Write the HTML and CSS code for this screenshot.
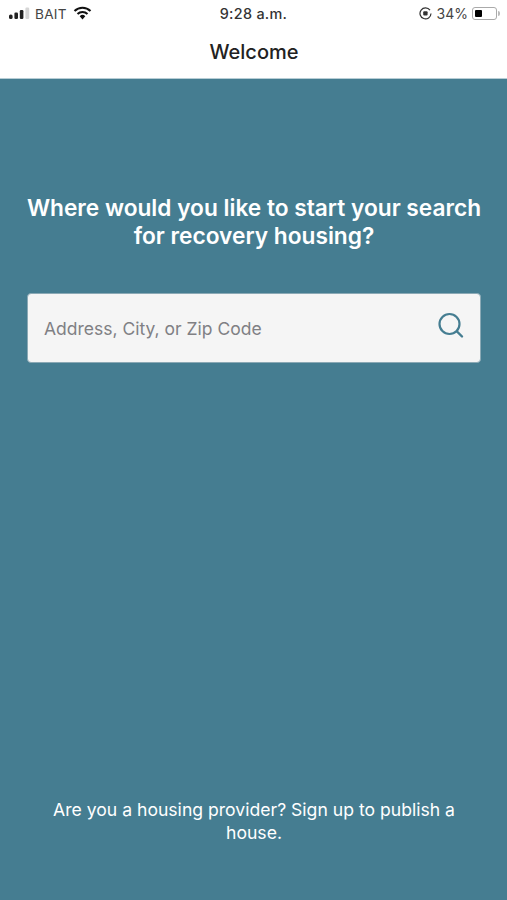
FILE: index.html
```html
<!DOCTYPE html>
<html lang="en">

<head>
    <meta charset="UTF-8">
    <meta name="viewport" content="width=device-width, initial-scale=1.0">
    <title>Welcome</title>
    <link rel="stylesheet" href="styles.css">
</head>

<body>
    <div class="status-bar">
        <div class="status-left">
            <svg class="signal" width="22" height="13" viewBox="0 0 22 13">
                <rect x="0" y="7.5" width="3.6" height="4.5" rx="1.6" fill="#222" />
                <rect x="5.4" y="5.5" width="3.6" height="6.5" rx="1.2" fill="#222" />
                <rect x="10.8" y="3" width="3.6" height="9" rx="1.2" fill="#222" />
                <rect x="16.4" y="0.5" width="3.8" height="11.5" rx="1.2" fill="#d6d6d6" />
            </svg>
            <span class="carrier">BAIT</span>
            <svg class="wifi" width="19" height="14" viewBox="0 0 18 14">
                <path d="M1 5a11.5 11.5 0 0 1 16 0" fill="none" stroke="#111" stroke-width="2.1" />
                <path d="M4 8a7.2 7.2 0 0 1 10 0" fill="none" stroke="#111" stroke-width="2.1" />
                <path d="M6.2 10.2 9 13.4l2.8-3.2a4 4 0 0 0-5.6 0z" fill="#111" />
            </svg>
        </div>
        <div class="status-time">9:28 a.m.</div>
        <div class="status-right">
            <svg width="13" height="13" viewBox="0 0 13 13">
                <path d="M11 3.2A5.5 5.5 0 1 0 12 6.5" fill="none" stroke="#333" stroke-width="1.2" />
                <rect x="4.2" y="4.2" width="4.4" height="4.4" rx="1" fill="#333" />
            </svg>
            <span class="battery-text">34%</span>
            <div class="battery">
                <div class="battery-level"></div>
            </div>
            <div class="battery-tip"></div>
        </div>
    </div>
    <header class="nav-bar">Welcome</header>
    <main class="content">
        <h1 class="headline">Where would you like to start your search for recovery housing?</h1>
        <div class="search-box">
            <span class="search-placeholder">Address, City, or Zip Code</span>
            <svg class="search-icon" width="28" height="28" viewBox="0 0 28 28">
                <circle cx="12.5" cy="12" r="10" fill="none" stroke="#457d91" stroke-width="2.2" />
                <path d="M20 19.5l5 5" fill="none" stroke="#457d91" stroke-width="2.4" stroke-linecap="round" />
            </svg>
        </div>
        <p class="provider-link">Are you a housing provider? Sign up to publish a house.</p>
    </main>
</body>

</html>
```

FILE: styles.css
```css
body {
    font-family: "Inter", "Liberation Sans", sans-serif;
    background-color: #457d91;
    color: #222;
    margin: 0;
    padding: 0;
    height: 900px;
    display: flex;
    flex-direction: column;
    overflow: hidden;
}

.status-bar {
    background: #fff;
    height: 27px;
    display: flex;
    justify-content: space-between;
    align-items: center;
    padding: 0 7px 0 9px;
    position: relative;
    font-size: 14px;
}

.status-left,
.status-right {
    display: flex;
    align-items: center;
}

.signal {
    margin-right: 4px;
}

.carrier {
    color: #444;
    font-size: 13.6px;
    letter-spacing: 0.3px;
    margin-right: 6px;
}

.wifi {
    margin-bottom: 2px;
}

.status-time {
    position: absolute;
    left: 0;
    right: 0;
    text-align: center;
    font-weight: 500;
    font-size: 14.4px;
    color: #333;
    letter-spacing: 0.3px;
}

.battery-text {
    color: #444;
    margin: 0 4px 0 5px;
}

.battery {
    width: 25px;
    height: 13px;
    border: 1px solid #aaa;
    border-radius: 3px;
    padding: 2px;
    box-sizing: border-box;
    display: flex;
}

.battery-level {
    width: 7px;
    background: #000;
    border-radius: 1px;
}

.battery-tip {
    width: 2px;
    height: 5px;
    background: #bbb;
    margin-left: 1px;
    border-radius: 0 2px 2px 0;
}

.nav-bar {
    background: #fff;
    height: 52px;
    box-sizing: border-box;
    padding-bottom: 1px;
    padding-left: 1px;
    display: flex;
    justify-content: center;
    align-items: center;
    font-size: 20px;
    font-weight: 500;
    color: #222;
    border-bottom: 1px solid #b7cdd5;
}

.content {
    flex: 1;
    display: flex;
    flex-direction: column;
    padding: 115px 26px 0 27px;
}

.headline {
    font-size: 22.7px;
    font-weight: 600;
    line-height: 28px;
    color: #fff;
    text-align: center;
    margin: 0 -5px 43px;
}

.search-box {
    background: #f5f5f5;
    height: 70px;
    box-sizing: border-box;
    border-radius: 4px;
    border: 1px solid #8ba9b5;
    display: flex;
    justify-content: space-between;
    align-items: center;
    padding: 0 15px 0 16px;
}

.search-placeholder {
    color: #808084;
    font-size: 17.5px;
    padding-top: 1px;
}

.search-icon {
    margin-bottom: 5px;
}

.provider-link {
    color: #fff;
    font-size: 17.6px;
    line-height: 23px;
    text-align: center;
    margin: auto 10px 56px;
}
```
